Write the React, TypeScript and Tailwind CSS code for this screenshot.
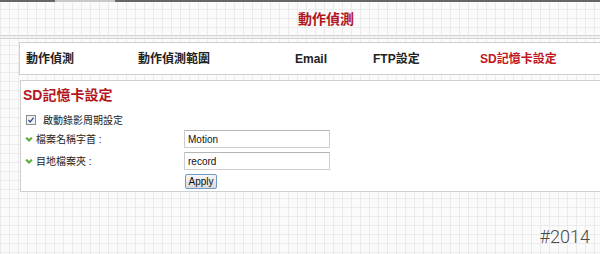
import React from 'react';

const cjk = '"Liberation Sans", "Noto Sans CJK TC", sans-serif';

const GreenCheck: React.FC = () => (
  <svg width="8" height="7" viewBox="0 0 8 7" className="shrink-0">
    <path d="M0.3 2.2 L2 1 L4 3 L6 1 L7.7 2.2 L4 6 Z" fill="#5cab3c" />
  </svg>
);

const CheckBox: React.FC = () => (
  <svg width="10" height="10" viewBox="0 0 10 10" className="shrink-0">
    <rect x="0.5" y="0.5" width="9" height="9" fill="#eef1f6" stroke="#8c8c8c" />
    <path d="M2.4 5 L4.2 7 L7.6 2.6" fill="none" stroke="#3b4f86" strokeWidth="1.3" />
  </svg>
);

const App: React.FC = () => {
  const tabs = ['動作偵測', '動作偵測範圍', 'Email', 'FTP設定', 'SD記憶卡設定'];

  return (
    <div
      className="w-[600px] h-[254px] overflow-hidden bg-[#fbfbfb] bg-[linear-gradient(#ebebeb_1px,transparent_1px),linear-gradient(90deg,#ebebeb_1px,transparent_1px)] bg-[size:9px_9px]"
      style={{ fontFamily: cjk }}
    >
      {/* top strip */}
      <div className="h-[2px] flex">
        <div className="w-[55px] bg-[#666]" />
        <div className="w-[60px] bg-[#c9c9c9]" />
        <div className="flex-1 bg-[#666]" />
      </div>

      {/* title */}
      <div className="w-[614px] ml-[19px] h-[33px] flex items-center justify-center">
        <span className="text-[14px] font-bold text-[#b3161e] leading-none">動作偵測</span>
      </div>

      <div className="h-[4px] border-y border-[#d4d4d4] bg-[#f1f1f1]" />

      {/* tabs */}
      <div className="mt-[3px] ml-[19px] w-[640px] h-[33px] border border-[#cfcfcf] bg-white grid grid-cols-[112px_157px_78px_107px_1fr] items-center pl-[6px] pt-[1px]">
        {tabs.map((t, i) => (
          <span
            key={t}
            className={`text-[12px] font-bold leading-none ${i === 4 ? 'text-[#c0161e]' : 'text-[#222]'}`}
          >
            {t}
          </span>
        ))}
      </div>

      {/* SD card settings */}
      <div className="mt-[5px] ml-[20px] w-[640px] h-[112px] border border-[#cfcfcf] bg-white">
        <div className="pl-[2px] pt-[6px] text-[14px] font-bold text-[#b3161e] leading-[16px]">SD記憶卡設定</div>

        <div className="mt-[10px] pl-[5px] h-[14px] flex items-center gap-[7px] text-[10px] text-[#222]">
          <CheckBox />
          <span>啟動錄影周期設定</span>
        </div>

        <div className="mt-[3px] pl-[4px] h-[18px] flex items-center text-[10px] text-[#222]">
          <div className="w-[159px] flex items-center gap-[3px]">
            <GreenCheck />
            <span>檔案名稱字首 :</span>
          </div>
          <div className="w-[146px] h-[18px] border border-[#cdcdcd] border-t-[#b5b5b5] flex items-center px-[3px] text-[10px] text-[#111]">
            Motion
          </div>
        </div>

        <div className="mt-[4px] pl-[4px] h-[18px] flex items-center text-[10px] text-[#222]">
          <div className="w-[159px] flex items-center gap-[3px]">
            <GreenCheck />
            <span>目地檔案夾 :</span>
          </div>
          <div className="w-[146px] h-[18px] border border-[#cdcdcd] border-t-[#b5b5b5] flex items-center px-[3px] text-[10px] text-[#111]">
            record
          </div>
        </div>

        <div className="mt-[4px] pl-[164px]">
          <button className="w-[32px] h-[15px] rounded-[2px] border border-[#6d9ac6] bg-[linear-gradient(#f6f6f6,#dadada)] text-[10px] leading-none text-[#111] flex items-center justify-center">
            Apply
          </button>
        </div>
      </div>

      <div className="mt-[36px] pr-[10px] flex justify-end">
        <span className="text-[18px] leading-[18px] font-light text-[#4a4a4a]" style={{ fontFamily: 'Roboto, "Liberation Sans", sans-serif' }}>
          #2014
        </span>
      </div>
    </div>
  );
};

export default App;
